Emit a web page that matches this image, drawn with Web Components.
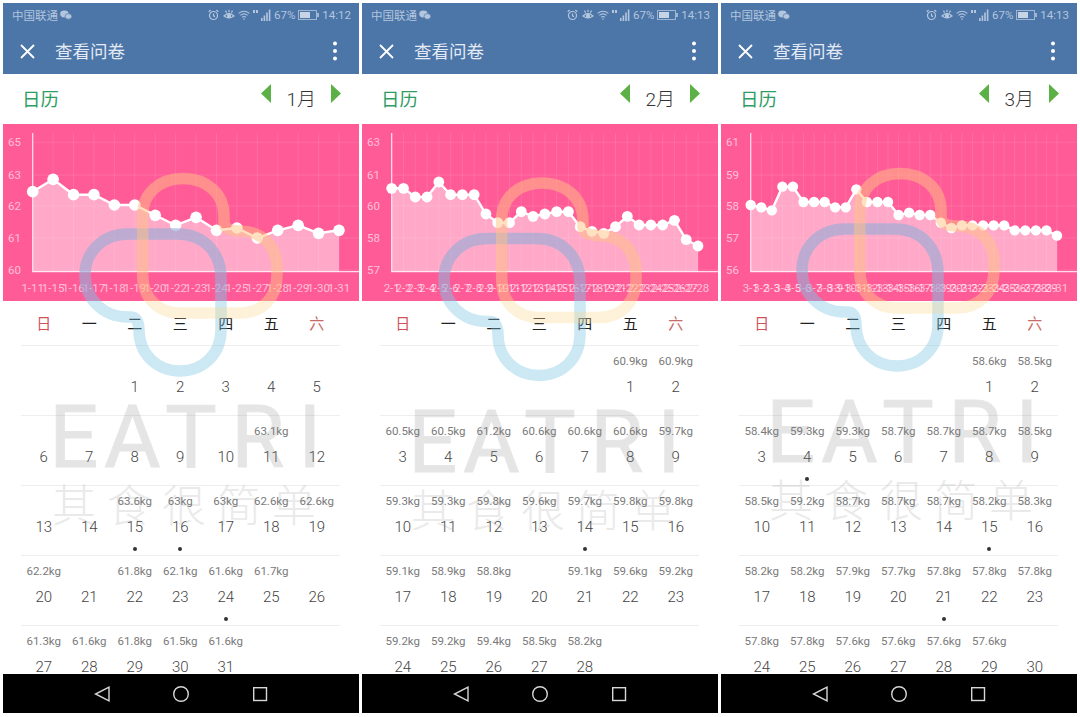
<!DOCTYPE html>
<html lang="zh">
<head>
<meta charset="utf-8">
<title>查看问卷</title>
<style>
    html, body { margin: 0; padding: 0; background: #fff; }
    body { font-family: Roboto, "Noto Sans CJK SC", sans-serif; }
    .screens { display: flex; gap: 3px; padding: 3px; }
</style>
</head>
<body>
<div class="screens">
    <phone-screen month="1" time="14:12"></phone-screen>
    <phone-screen month="2" time="14:13"></phone-screen>
    <phone-screen month="3" time="14:13"></phone-screen>
</div>

<script>
// y values are read off the chart in 3x zoom pixels, weights are [day, kg]
const MONTHS = {
    1: {
        first: 2, days: 31,
        ticks: [65, 63, 62, 61, 60],
        labels: ['1-11','1-15','1-16','1-17','1-18','1-19','1-20','1-22','1-23','1-24','1-25','1-27','1-28','1-29','1-30','1-31'],
        ys: [215,178,224,224,255,255,286,316,292,331,324,354,331,316,340,331],
        radius: 5.8,
        weights: {11:'63.1',15:'63.6',16:'63',17:'63',18:'62.6',19:'62.6',20:'62.2',22:'61.8',23:'62.1',24:'61.6',25:'61.7',27:'61.3',28:'61.6',29:'61.8',30:'61.5',31:'61.6'},
        dots: [15, 16, 24],
        logo: [0, 0]
    },
    2: {
        first: 5, days: 28,
        ticks: [63, 61, 60, 58, 57],
        labels: ['2-1','2-2','2-3','2-4','2-5','2-6','2-7','2-8','2-9','2-10','2-11','2-12','2-13','2-14','2-15','2-16','2-17','2-18','2-19','2-21','2-22','2-23','2-24','2-25','2-26','2-27','2-28'],
        ys: [205,205,231,231,186,224,224,224,282,308,308,275,289,282,275,275,320,334,340,320,289,315,315,315,301,359,378],
        radius: 5.4,
        weights: {1:'60.9',2:'60.9',3:'60.5',4:'60.5',5:'61.2',6:'60.6',7:'60.6',8:'60.6',9:'59.7',10:'59.3',11:'59.3',12:'59.8',13:'59.6',14:'59.7',15:'59.8',16:'59.8',17:'59.1',18:'58.9',19:'58.8',21:'59.1',22:'59.6',23:'59.2',24:'59.2',25:'59.2',26:'59.4',27:'58.5',28:'58.2'},
        dots: [14],
        logo: [0, 4.5]
    },
    3: {
        first: 5, days: 30,
        ticks: [61, 59, 58, 57, 56],
        labels: ['3-1','3-2','3-3','3-4','3-5','3-6','3-7','3-8','3-9','3-10','3-11','3-12','3-13','3-14','3-15','3-16','3-17','3-18','3-19','3-20','3-21','3-22','3-23','3-24','3-25','3-26','3-27','3-28','3-29','3-31'],
        ys: [255,262,271,200,200,246,246,246,262,262,208,246,246,246,285,278,285,285,308,324,316,316,316,316,316,331,331,331,331,347],
        radius: 5.2,
        weights: {1:'58.6',2:'58.5',3:'58.4',4:'59.3',5:'59.3',6:'58.7',7:'58.7',8:'58.7',9:'58.5',10:'58.5',11:'59.2',12:'58.7',13:'58.7',14:'58.7',15:'58.2',16:'58.3',17:'58.2',18:'58.2',19:'57.9',20:'57.7',21:'57.8',22:'57.8',23:'57.8',24:'57.8',25:'57.8',26:'57.6',27:'57.6',28:'57.6',29:'57.6'},
        dots: [4, 15, 21],
        logo: [-1, -5]
    }
};

class StatusBar extends HTMLElement{
    constructor(){
        super();
        this.attachShadow({mode:'open'});
    }
    connectedCallback(){
        this.shadowRoot.innerHTML = `
            <style>
                :host{
                    display: flex;
                    align-items: center;
                    height: 25px;
                    padding: 0 8px 2px 9px;
                    color: #b3c6de;
                    font-size: 11.5px;
                    box-sizing: border-box;
                }
                svg{ display: block; flex: none; }
                .carrier{ margin-right: 2px; }
                .right{ margin-left: auto; display: flex; align-items: center; }
            </style>
            <span class="carrier"><slot name="carrier"></slot></span>
            <svg width="12" height="10" viewBox="0 0 12 10" fill="#b3c6de">
                <ellipse cx="4.4" cy="4" rx="4.2" ry="3.4"/>
                <ellipse cx="8.4" cy="6.4" rx="3.4" ry="2.8" stroke="#4c75a8" stroke-width=".7"/>
            </svg>
            <span class="right">
                <svg width="11" height="12" viewBox="0 0 11 12" fill="none" stroke="#b3c6de" stroke-width="1.2" style="margin-right:4px">
                    <circle cx="5.5" cy="6.5" r="4"/><path d="M5.5 4.5V6.8L7 7.6M.7 2.8 2.6 1M10.3 2.8 8.4 1"/>
                </svg>
                <svg width="12" height="12" viewBox="0 0 12 12" fill="none" stroke="#b3c6de" stroke-width="1.2" style="margin-right:3px">
                    <path d="M1 7Q6 2 11 7Q6 11 1 7Z"/><circle cx="6" cy="7" r="1.6" fill="#b3c6de"/><path d="M6 .8V3M2.5 1.6 3.6 3.6M9.5 1.6 8.4 3.6"/>
                </svg>
                <svg width="12" height="10" viewBox="0 0 12 10" fill="none" stroke="#b3c6de" stroke-width="1.1" style="margin-right:3px">
                    <path d="M.6 3.4Q6-1 11.4 3.4M2.4 5.4Q6 2.4 9.6 5.4M4.2 7.2Q6 5.8 7.8 7.2"/><circle cx="6" cy="9" r=".8" fill="#b3c6de" stroke="none"/>
                </svg>
                <svg width="19" height="12" viewBox="0 0 19 12" fill="#b3c6de" style="margin-right:2px">
                    <rect x="0" y="1" width="2" height="3"/><rect x="3" y="1" width="2" height="3"/>
                    <rect x="8" y="9" width="1.6" height="3"/><rect x="10.6" y="6.5" width="1.6" height="5.5"/><rect x="13.2" y="3.5" width="1.6" height="8.5"/><rect x="15.8" y=".5" width="1.6" height="11.5"/>
                </svg>
                <span style="margin-right:3px"><slot name="battery"></slot></span>
                <svg width="21" height="10" viewBox="0 0 21 10" style="margin-right:3px">
                    <rect x=".5" y=".5" width="18" height="9" fill="none" stroke="#9fb6d3"/>
                    <rect x="2" y="2" width="10" height="6" fill="#c6d4e6"/><rect x="19" y="3" width="2" height="4" fill="#9fb6d3"/>
                </svg>
                <slot name="time"></slot>
            </span>
        `;
    }
}
customElements.define('status-bar', StatusBar);

class AppToolbar extends HTMLElement{
    constructor(){
        super();
        this.attachShadow({mode:'open'});
    }
    connectedCallback(){
        this.shadowRoot.innerHTML = `
            <style>
                :host{
                    display: flex;
                    align-items: center;
                    gap: 20px;
                    height: 46px;
                    padding: 0 22px 0 17px;
                    color: #e4eaf3;
                    font-size: 17.5px;
                    box-sizing: border-box;
                }
                svg{ display: block; flex: none; }
                .title{ margin-bottom: 2px; }
                .more{ margin-left: auto; }
            </style>
            <svg width="15" height="15" viewBox="0 0 15 15" stroke="#fff" stroke-width="1.8" fill="none">
                <path d="M1 1 14 14M14 1 1 14"/>
            </svg>
            <span class="title"><slot></slot></span>
            <svg class="more" width="4" height="20" viewBox="0 0 4 20" fill="#fff">
                <circle cx="2" cy="2.4" r="2"/><circle cx="2" cy="10" r="2"/><circle cx="2" cy="17.4" r="2"/>
            </svg>
        `;
    }
}
customElements.define('app-toolbar', AppToolbar);

class MonthBar extends HTMLElement{
    constructor(){
        super();
        this.attachShadow({mode:'open'});
    }
    connectedCallback(){
        this.shadowRoot.innerHTML = `
            <style>
                :host{
                    display: flex;
                    align-items: center;
                    height: 50px;
                    padding: 0 18px 0 19px;
                    font-size: 18.5px;
                    color: #333;
                    background: #fff;
                    box-sizing: border-box;
                }
                .title{ color: #2f9d63; margin-bottom: 3px; }
                .pager{ margin-left: auto; display: flex; align-items: center; gap: 15px; font-size: 19px; font-weight: 300; }
                .pager span{ margin-bottom: 3px; }
                svg{ display: block; flex: none; margin-bottom: 11px; }
            </style>
            <span class="title"><slot name="title"></slot></span>
            <span class="pager">
                <svg width="10" height="19" viewBox="0 0 10 19" fill="#5cb146"><path d="M10 0V19L0 9.5Z"/></svg>
                <span><slot name="month"></slot></span>
                <svg width="10" height="19" viewBox="0 0 10 19" fill="#5cb146"><path d="M0 0V19L10 9.5Z"/></svg>
            </span>
        `;
    }
}
customElements.define('month-bar', MonthBar);

class WeightChart extends HTMLElement{
    constructor(){
        super();
        this.attachShadow({mode:'open'});
    }
    connectedCallback(){
        const data = MONTHS[this.getAttribute('month')];
        const n = data.labels.length;
        const px = i => 29.7 + i * 306.3 / (n - 1);
        const py = i => data.ys[i] / 3 - 4;
        const tickY = [18.3, 51, 82, 114, 146];
        const pts = data.ys.map((_, i) => `${px(i).toFixed(1)},${py(i).toFixed(1)}`).join(' ');
        const grid = data.labels.map((_, i) => `<line x1="${px(i)}" x2="${px(i)}" y1="9" y2="148"/>`).join('')
            + tickY.map(y => `<line x1="30" x2="356" y1="${y}" y2="${y}"/>`).join('');
        this.shadowRoot.innerHTML = `
            <style>
                :host{ display: block; height: 177px; background: #ff5c97; }
                svg{ display: block; font-family: Roboto, sans-serif; }
                text{ fill: rgba(255,255,255,.62); font-size: 11.5px; text-anchor: middle; }
                .grid line{ stroke: rgba(255,255,255,.1); stroke-width: 1; }
            </style>
            <svg width="356" height="177" viewBox="0 0 356 177">
                <g class="grid">${grid}</g>
                <polygon points="29.7,147.7 ${pts} 336,147.7" fill="rgba(255,255,255,.47)"/>
                <path d="M29.7 9V147.7H356" fill="none" stroke="rgba(255,255,255,.8)" stroke-width="1.2"/>
                <polyline points="${pts}" fill="none" stroke="#fff" stroke-width="2.4"/>
                ${data.ys.map((_, i) => `<circle cx="${px(i)}" cy="${py(i)}" r="${data.radius}" fill="#fff"/>`).join('')}
                ${data.ticks.map((t, i) => `<text x="11.5" y="${tickY[i] + 4}" font-size="12">${t}</text>`).join('')}
                ${data.labels.map((l, i) => `<text x="${px(i)}" y="168">${l}</text>`).join('')}
            </svg>
        `;
    }
}
customElements.define('weight-chart', WeightChart);

class MonthCalendar extends HTMLElement{
    constructor(){
        super();
        this.attachShadow({mode:'open'});
    }
    static get styleCss(){
        return `
            :host{
                display: block;
                flex: 1;
                min-height: 0;
                overflow: hidden;
                padding: 0 19.5px 0 18px;
                background: #fff;
            }
            .week, .row{
                display: grid;
                grid-template-columns: repeat(7, 1fr);
                text-align: center;
            }
            .week{
                height: 44px;
                box-sizing: border-box;
                padding-bottom: 1px;
                align-items: center;
                font-size: 15px;
                color: #222;
            }
            .week .sun{ color: #d2525a; }
            .week .sat{ color: #c96a6a; }
            .row{
                height: 70px;
                box-sizing: border-box;
                border-top: 1px solid #eeeeee;
            }
            .cell{
                display: flex;
                flex-direction: column;
                align-items: center;
            }
            .kg{
                height: 16px;
                margin-top: 7px;
                line-height: 16px;
                font-size: 11.5px;
                color: #7a7a7a;
                white-space: nowrap;
            }
            .day{
                height: 20px;
                margin-top: 8px;
                line-height: 20px;
                font-size: 15px;
                font-weight: 300;
                color: #444;
            }
            .dot{
                width: 4px;
                height: 4px;
                margin-top: 10px;
                border-radius: 50%;
                background: #333;
            }
        `;
    }
    connectedCallback(){
        const data = MONTHS[this.getAttribute('month')];
        const cells = [];
        for(let i = 0; i < data.first; i++) cells.push('<div class="cell"></div>');
        for(let d = 1; d <= data.days; d++){
            const kg = data.weights[d] ? data.weights[d] + 'kg' : '';
            cells.push(`<div class="cell">
                <div class="kg">${kg}</div>
                <div class="day">${d}</div>
                ${data.dots.includes(d) ? '<div class="dot"></div>' : ''}
            </div>`);
        }
        let rows = '';
        for(let i = 0; i < cells.length; i += 7){
            rows += `<div class="row">${cells.slice(i, i + 7).join('')}</div>`;
        }
        this.shadowRoot.innerHTML = `
            <style>${MonthCalendar.styleCss}</style>
            <div class="week">
                <span class="sun">日</span><span>一</span><span>二</span><span>三</span><span>四</span><span>五</span><span class="sat">六</span>
            </div>
            ${rows}
        `;
    }
}
customElements.define('month-calendar', MonthCalendar);

class NavBar extends HTMLElement{
    constructor(){
        super();
        this.attachShadow({mode:'open'});
    }
    connectedCallback(){
        this.shadowRoot.innerHTML = `
            <style>
                :host{
                    display: flex;
                    align-items: center;
                    justify-content: center;
                    gap: 63px;
                    height: 39px;
                    background: #000;
                }
                svg{ display: block; fill: none; stroke: #d8d8d8; stroke-width: 1.4; }
            </style>
            <svg width="16" height="16" viewBox="0 0 16 16"><path d="M15 1.2V14.8L1.5 8Z"/></svg>
            <svg width="16" height="16" viewBox="0 0 16 16"><circle cx="8" cy="8" r="7.3"/></svg>
            <svg width="16" height="16" viewBox="0 0 16 16"><rect x="1.7" y="1.7" width="12.8" height="12.8"/></svg>
        `;
    }
}
customElements.define('nav-bar', NavBar);

// the EATRI mark that lies over the whole screen
class BrandWatermark extends HTMLElement{
    constructor(){
        super();
        this.attachShadow({mode:'open'});
    }
    connectedCallback(){
        const dx = Number(this.getAttribute('dx')) || 0;
        const dy = Number(this.getAttribute('dy')) || 0;
        const edge = ((301 - dy) / 717).toFixed(4);
        this.shadowRoot.innerHTML = `
            <style>
                :host{ position: absolute; inset: 0; pointer-events: none; }
                svg{ display: block; }
                .word{ opacity: .2; }
                .word text{ fill: #828282; stroke: #828282; stroke-width: .8; }
                .slogan{ opacity: .16; }
                .slogan text{ fill: #828282; }
            </style>
            <svg width="356" height="710" viewBox="3 3 356 710">
                <defs>
                    <linearGradient id="warm" gradientUnits="userSpaceOnUse" x1="0" y1="0" x2="0" y2="717">
                        <stop offset="${edge}" stop-color="rgb(255,195,130)" stop-opacity=".5"/>
                        <stop offset="${edge}" stop-color="rgb(250,215,140)" stop-opacity=".33"/>
                    </linearGradient>
                    <linearGradient id="cool" gradientUnits="userSpaceOnUse" x1="0" y1="0" x2="0" y2="717">
                        <stop offset="${edge}" stop-color="rgb(150,172,215)" stop-opacity=".62"/>
                        <stop offset="${edge}" stop-color="rgb(120,195,225)" stop-opacity=".38"/>
                    </linearGradient>
                </defs>
                <g transform="translate(${dx} ${dy})">
                    <path fill="none" stroke="url(#cool)" stroke-width="11.5" d="M85 275C85 299 103 317 128 317H131C136 317 139 322 139 330C139 354 157 371 180 371C203 371 221 354 221 330V278C221 252 203 234 178 234H128C103 234 85 252 85 275Z"/>
                    <path fill="none" stroke="url(#warm)" stroke-width="11.5" d="M142.7 275V215C142.7 193 160 178.5 183 178.5C206 178.5 224 193 224 216V222C224 228 230 231 240 231C262 231 277 246 277 268V275C277 298 262 313 240 313H180C158 313 142.7 298 142.7 275Z"/>
                    <g class="word"><text font-family="Roboto, sans-serif" font-size="87" x="49 104 165 231 298" y="467">EATRI</text></g>
                    <g class="slogan"><text font-family="'Noto Sans CJK SC', sans-serif" font-size="44" font-weight="300" x="52 107 162 217 272" y="522">其食很简单</text></g>
                </g>
            </svg>
        `;
    }
}
customElements.define('brand-watermark', BrandWatermark);

class PhoneScreen extends HTMLElement{
    constructor(){
        super();
        this.attachShadow({mode:'open'});
    }
    connectedCallback(){
        const month = this.getAttribute('month');
        const time = this.getAttribute('time');
        const [dx, dy] = MONTHS[month].logo;
        this.shadowRoot.innerHTML = `
            <style>
                :host{
                    position: relative;
                    display: flex;
                    flex-direction: column;
                    width: 356px;
                    height: 710px;
                    overflow: hidden;
                    font-family: Roboto, "Noto Sans CJK SC", sans-serif;
                }
                .top{ background: #4c75a8; }
            </style>
            <div class="top">
                <status-bar>
                    <span slot="carrier">中国联通</span>
                    <span slot="battery">67%</span>
                    <span slot="time">${time}</span>
                </status-bar>
                <app-toolbar>查看问卷</app-toolbar>
            </div>
            <month-bar>
                <span slot="title">日历</span>
                <span slot="month">${month}月</span>
            </month-bar>
            <weight-chart month="${month}"></weight-chart>
            <month-calendar month="${month}"></month-calendar>
            <nav-bar></nav-bar>
            <brand-watermark dx="${dx}" dy="${dy}"></brand-watermark>
        `;
    }
}
customElements.define('phone-screen', PhoneScreen);
</script>
</body>
</html>
